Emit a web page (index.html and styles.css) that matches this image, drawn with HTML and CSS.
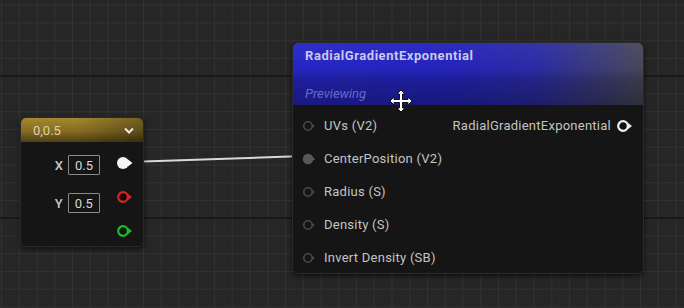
FILE: index.html
```html
<!DOCTYPE html>
<html>
<head>
<meta charset="utf-8">
<link rel="stylesheet" href="styles.css">
</head>
<body>
<div class="canvas">
  <svg class="wire" width="684" height="308" viewBox="0 0 684 308">
    <path d="M128 162 L304 156" stroke="#d8d8d8" stroke-width="2" fill="none" stroke-linecap="round"/>
  </svg>

  <div class="node vec-node">
    <div class="vec-header">
      <span class="vec-title">0,0.5</span>
      <svg class="chev" width="10" height="7" viewBox="0 0 10 7"><path d="M1 1.5 L5 5.5 L9 1.5" stroke="#e8e8e8" stroke-width="2" fill="none"/></svg>
    </div>
    <div class="vec-body">
      <div class="vec-fields">
        <div class="field"><span class="flabel">X</span><span class="fbox">0.5</span></div>
        <div class="field"><span class="flabel">Y</span><span class="fbox">0.5</span></div>
      </div>
      <div class="vec-pins">
        <svg class="pin" width="18" height="14" viewBox="0 0 18 14"><circle cx="7" cy="7" r="6" fill="#f4f4f4"/><path d="M12 3.5 L16.5 7 L12 10.5 Z" fill="#f4f4f4"/></svg>
        <svg class="pin" width="18" height="14" viewBox="0 0 18 14"><circle cx="7" cy="7" r="4.8" fill="#1a0808" stroke="#d42424" stroke-width="2.2"/><path d="M11.8 3.8 L16 7 L11.8 10.2 Z" fill="#d42424"/></svg>
        <svg class="pin" width="18" height="14" viewBox="0 0 18 14"><circle cx="7" cy="7" r="4.8" fill="#081a08" stroke="#22b830" stroke-width="2.2"/><path d="M11.8 3.8 L16 7 L11.8 10.2 Z" fill="#22b830"/></svg>
      </div>
    </div>
  </div>

  <div class="node fn-node">
    <div class="fn-header">
      <div class="fn-title">RadialGradientExponential</div>
      <div class="fn-sub">Previewing</div>
    </div>
    <div class="fn-body">
      <div class="fn-inputs">
        <div class="row"><svg class="ipin" width="14" height="12" viewBox="0 0 14 12"><circle cx="6" cy="6" r="4.2" fill="none" stroke="#4a4a4a" stroke-width="1.6"/><path d="M10.4 4 L12.8 6 L10.4 8 Z" fill="#4a4a4a"/></svg><span>UVs (V2)</span></div>
        <div class="row"><svg class="ipin" width="14" height="12" viewBox="0 0 14 12"><circle cx="6" cy="6" r="5.2" fill="#585858"/><path d="M10 3.5 L13.2 6 L10 8.5 Z" fill="#585858"/></svg><span>CenterPosition (V2)</span></div>
        <div class="row"><svg class="ipin" width="14" height="12" viewBox="0 0 14 12"><circle cx="6" cy="6" r="4.2" fill="none" stroke="#4a4a4a" stroke-width="1.6"/><path d="M10.4 4 L12.8 6 L10.4 8 Z" fill="#4a4a4a"/></svg><span>Radius (S)</span></div>
        <div class="row"><svg class="ipin" width="14" height="12" viewBox="0 0 14 12"><circle cx="6" cy="6" r="4.2" fill="none" stroke="#4a4a4a" stroke-width="1.6"/><path d="M10.4 4 L12.8 6 L10.4 8 Z" fill="#4a4a4a"/></svg><span>Density (S)</span></div>
        <div class="row"><svg class="ipin" width="14" height="12" viewBox="0 0 14 12"><circle cx="6" cy="6" r="4.2" fill="none" stroke="#4a4a4a" stroke-width="1.6"/><path d="M10.4 4 L12.8 6 L10.4 8 Z" fill="#4a4a4a"/></svg><span>Invert Density (SB)</span></div>
      </div>
      <div class="fn-outputs">
        <div class="row out"><span>RadialGradientExponential</span><svg class="opin" width="18" height="14" viewBox="0 0 18 14"><circle cx="7" cy="7" r="4.8" fill="#111" stroke="#f0f0f0" stroke-width="2.2"/><path d="M11.8 3.8 L16 7 L11.8 10.2 Z" fill="#f0f0f0"/></svg></div>
      </div>
    </div>
  </div>

  <svg class="cursor" width="24" height="24" viewBox="0 0 24 24">
    <path d="M12 1 L16 5 L13.5 5 L13.5 10.5 L19 10.5 L19 8 L23 12 L19 16 L19 13.5 L13.5 13.5 L13.5 19 L16 19 L12 23 L8 19 L10.5 19 L10.5 13.5 L5 13.5 L5 16 L1 12 L5 8 L5 10.5 L10.5 10.5 L10.5 5 L8 5 Z" fill="#ffffff" stroke="#111" stroke-width="1"/>
  </svg>
</div>
</body>
</html>
```

FILE: styles.css
```css
html, body {
  margin: 0;
  padding: 0;
  background: #252525;
}
.canvas {
  position: relative;
  width: 684px;
  height: 308px;
  overflow: hidden;
  font-family: Roboto, "Liberation Sans", sans-serif;
  background-color: #262626;
  background-image:
    linear-gradient(to bottom, #1a1a1a 2px, transparent 2px),
    linear-gradient(to bottom, #323232 1px, transparent 1px),
    linear-gradient(to right, #323232 1px, transparent 1px);
  background-size: 100% 142px, 100% 17.75px, 17.75px 100%;
  background-position: 0 75px, 0 4.75px, 1px 0;
}
.wire {
  position: absolute;
  left: 0;
  top: 0;
}
.node {
  position: absolute;
  border-radius: 6px;
  background: #151515;
  border: 1px solid #2a2a2a;
  box-shadow: 0 2px 5px rgba(0,0,0,0.6);
  overflow: hidden;
  box-sizing: border-box;
}
.vec-node {
  left: 20px;
  top: 117px;
  width: 124px;
  height: 130px;
}
.vec-header {
  height: 24px;
  display: flex;
  align-items: center;
  justify-content: space-between;
  padding: 0 9px 0 12px;
  background:
    linear-gradient(to right, rgba(0,0,0,0) 45%, rgba(0,0,0,0.3) 100%),
    linear-gradient(to bottom, #a4882f 0%, #866c22 55%, #4e3f14 100%);
}
.vec-title {
  color: #ddd2a8;
  font-size: 13px;
}
.chev {
  display: block;
}
.vec-body {
  display: flex;
  justify-content: flex-end;
  padding-right: 9px;
  gap: 16px;
}
.vec-fields {
  display: flex;
  flex-direction: column;
  gap: 18px;
  padding-top: 13px;
}
.field {
  display: flex;
  align-items: center;
  gap: 5px;
}
.flabel {
  color: #c8c8c8;
  font-size: 13px;
  font-weight: 500;
}
.fbox {
  width: 30px;
  height: 18px;
  border: 1px solid #8a8a8a;
  color: #d8d8d8;
  font-size: 13px;
  display: flex;
  align-items: center;
  justify-content: center;
  border-radius: 1px;
}
.vec-pins {
  display: flex;
  flex-direction: column;
  gap: 20px;
  padding-top: 14px;
}
.pin {
  display: block;
}
.fn-node {
  left: 292px;
  top: 42px;
  width: 352px;
  height: 232px;
}
.fn-header {
  height: 62px;
  padding: 5px 12px 0 12px;
  box-sizing: border-box;
  background:
    linear-gradient(to bottom, rgba(255,255,255,0.04) 0%, rgba(0,0,0,0) 40%, rgba(0,0,0,0.2) 60%, rgba(0,0,0,0.35) 100%),
    linear-gradient(to right, #2626c4 0%, #2424bc 45%, #2c2ca4 70%, #3c3c78 88%, #48485a 100%);
}
.fn-title {
  color: #c8c8f0;
  font-size: 13px;
  font-weight: 700;
  letter-spacing: 0.55px;
  height: 15px;
  line-height: 15px;
}
.fn-sub {
  margin-top: 23px;
  color: #6868c8;
  font-size: 13px;
  font-style: italic;
  line-height: 15px;
}
.fn-body {
  display: flex;
  justify-content: space-between;
  padding: 4px 9px 0 9px;
}
.fn-inputs {
  display: flex;
  flex-direction: column;
}
.row {
  height: 33px;
  display: flex;
  align-items: center;
  gap: 8px;
  color: #c4c4c4;
  font-size: 13px;
  letter-spacing: 0.25px;
}
.row.out {
  gap: 5px;
}
.ipin, .opin {
  display: block;
}
.cursor {
  position: absolute;
  left: 389px;
  top: 89px;
}
```
